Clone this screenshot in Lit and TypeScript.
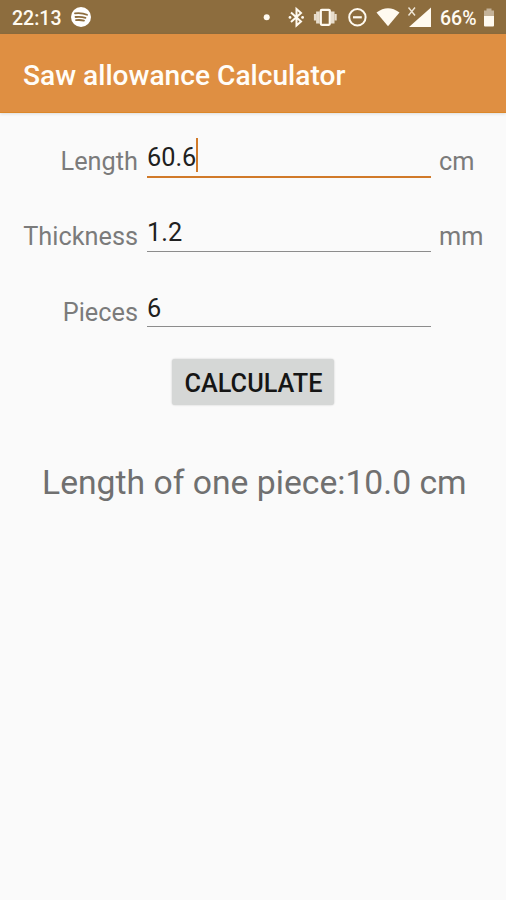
import { LitElement, html, css, nothing } from "lit";
import { customElement, property } from "lit/decorators.js";

@customElement("status-bar")
class StatusBar extends LitElement {
  static styles = css`
    :host { display: flex; align-items: center; height: 34px; box-sizing: border-box;
      background: #8d6d3e; color: #fffaf0; padding-left: 12px;
      font: 500 19px/34px Roboto, sans-serif; }
    .time { width: 58px; padding-top: 3px; font-size: 19.5px; white-space: nowrap; }
    .battery { width: 42px; padding-top: 3px; white-space: nowrap; font-size: 19.5px; }
    svg { display: block; flex: none; }
    .left { flex: 1; }
  `;
  render() {
    return html`
      <span class="time">22:13</span>
      <svg class="left" height="34" viewBox="0 0 176 34" preserveAspectRatio="xMinYMid meet">
        <circle cx="11" cy="17" r="10" fill="#fff" />
        <g fill="none" stroke="#8d6d3e" stroke-width="1.8" stroke-linecap="round">
          <path d="M5 13.300q7-.8 12 1.500" /><path d="M5.500 17q5.500-.7 10 .8" /><path d="M6 20.200q4-.6 8 .4" />
        </g>
      </svg>
      <svg width="194" height="34" viewBox="246 0 194 34" fill="#fffaf0">
        <circle cx="266.700" cy="17.300" r="3" />
        <path d="M291 12.500l10 9-4.500 4V9l4.500 4-10 9" fill="none" stroke="#fffaf0" stroke-width="2" />
        <circle cx="290" cy="17.400" r="1.400" /><circle cx="302.600" cy="17.400" r="1.400" />
        <rect x="320.800" y="9.800" width="9" height="15" rx="1" fill="none" stroke="#fffaf0" stroke-width="2.200" />
        <path d="M317.900 11.500v12M332.700 11.500v12" stroke="#fffaf0" stroke-width="3.600" opacity=".8" />
        <path d="M315 14v6.500M335.600 14v6.500" stroke="#fffaf0" stroke-width="2.200" opacity=".8" />
        <circle cx="357.400" cy="17.300" r="8.200" fill="none" stroke="#fffaf0" stroke-width="2" />
        <path d="M353 17.300h8.800" stroke="#fffaf0" stroke-width="2.200" />
        <path d="M376.500 12.500q11.500-8.500 23 0L388 26.200z" />
        <path d="M431 7.500V27h-22z" />
        <path d="M408.500 7.500l6.500 8M415 7.500l-6.500 8" stroke="#fffaf0" stroke-width="1.400" opacity=".85" />
      </svg>
      <span class="battery">66%</span>
      <svg width="24" height="34" viewBox="482 0 24 34">
        <path d="M484 10.500h2.500V8.500h5v2h2.500v5.500h-10z" fill="#c4b298" />
        <path d="M484 16h10v9.500q0 1-1 1h-8q-1 0-1-1z" fill="#fffaf0" />
      </svg>`;
  }
}

@customElement("form-row")
class FormRow extends LitElement {
  @property() label = "";
  @property() value = "";
  @property() unit = "";
  @property({ type: Boolean, reflect: true }) active = false;
  static styles = css`
    :host { display: grid; grid-template-columns: 138px 284px 1fr; column-gap: 9px;
      height: 75px; color: #7b7b7b; font: 400 25.3px/30px Roboto, sans-serif; }
    .label { text-align: right; padding-top: 12px; white-space: nowrap; }
    .unit { padding-top: 12px; margin-left: -1px; }
    .field { box-sizing: border-box; display: flex; height: 42px; padding-top: 3px;
      border-bottom: 1px solid #8c8c8c; color: #202020; }
    .value { padding-top: 5px; }
    :host(:last-of-type) .label { padding-top: 13px; }
    :host(:last-of-type) .value { padding-top: 6px; }
    :host([active]) .field { height: 43px; border-bottom: 2px solid #d17a29; }
    .caret { width: 2px; height: 34px; background: #d17a29; }
  `;
  render() {
    return html`<span class="label">${this.label}</span>
      <div class="field"><span class="value">${this.value}</span>${this.active ? html`<i class="caret"></i>` : nothing}</div>
      <span class="unit">${this.unit}</span>`;
  }
}

@customElement("app-root")
class AppRoot extends LitElement {
  static styles = css`
    :host { display: flex; flex-direction: column; height: 900px; background: #fafafa;
      font-family: Roboto, sans-serif; overflow: hidden; }
    header { height: 79px; box-sizing: border-box; padding: 1px 23px 0; background: #df8f42;
      color: #fffdf8; font-size: 28.15px; font-weight: 500; line-height: 82px; white-space: nowrap;
      border-bottom: 1px solid #dc8729; box-shadow: 0 1px 3px rgba(0,0,0,.12); }
    h1 { margin: 0; font: inherit; }
    main { display: flex; flex-direction: column; padding-top: 22px; }
    button { align-self: center; width: 162px; height: 46px; margin: -1px 0 0; padding: 2px 0 0 1px;
      border: 0; border-radius: 3px; background: #d5d7d6; color: #151515;
      box-shadow: 0 0 2px rgba(0,0,0,.22); font: 500 25.3px/46px Roboto, sans-serif; }
    .result { margin: 57px 0 0; padding-left: 42px; font-size: 33.7px; line-height: 42px; color: #707070;
      white-space: nowrap; }
  `;
  render() {
    return html`<status-bar></status-bar>
      <header><h1>Saw allowance Calculator</h1></header>
      <main>
        <form-row label="Length" value="60.6" unit="cm" active></form-row>
        <form-row label="Thickness" value="1.2" unit="mm"></form-row>
        <form-row label="Pieces" value="6"></form-row>
        <button type="button">CALCULATE</button>
        <p class="result">Length of one piece:10.0 cm</p>
      </main>`;
  }
}
